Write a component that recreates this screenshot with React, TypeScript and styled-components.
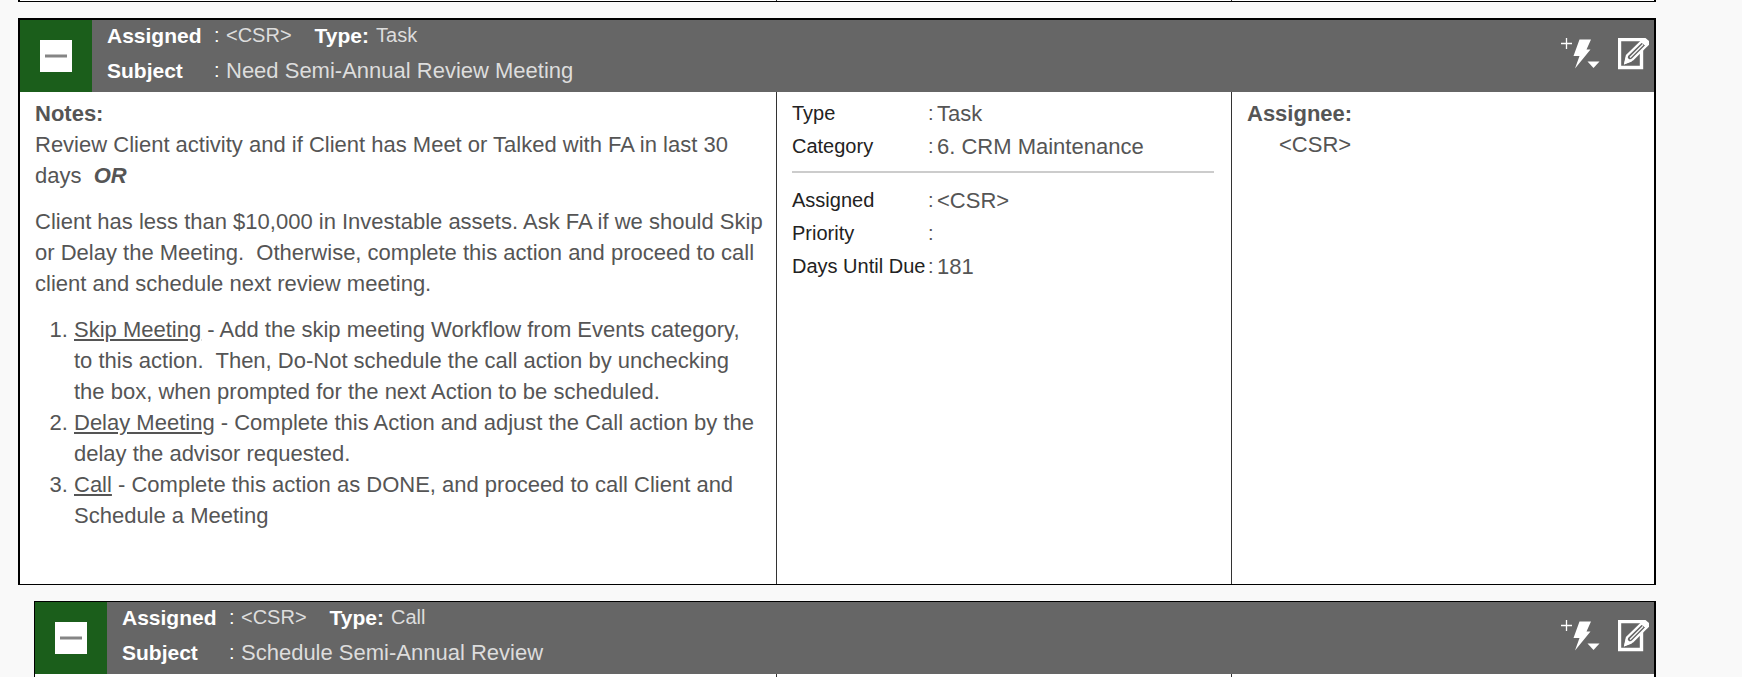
import React from "react";
import styled, { createGlobalStyle } from "styled-components";

const GlobalStyle = createGlobalStyle`
  * { box-sizing: border-box; }
  body {
    margin: 0;
    background: #f9f9f9;
    color: #555;
    font: 22px/31px "Liberation Sans", Arial, sans-serif;
  }
`;

const Page = styled.main`
  display: flex;
  flex-direction: column;
  gap: 16px;
  min-height: 100vh;
  padding: 0 86px 0 18px;
`;

const Card = styled.article<{ $nested?: boolean; $continued?: boolean }>`
  display: flex;
  flex-direction: column;
  flex: ${(p) => (p.$continued ? "1 0 auto" : "0 0 auto")};
  margin-left: ${(p) => (p.$nested ? 16 : 0)}px;
  border: solid #000;
  border-width: ${(p) =>
    p.$nested ? "1px 2px 0 1px" : "2px 2px 1px 2px"};
  background: #fff;
`;

const PreviousCard = styled(Card)`
  border-top: 0;
`;

const Header = styled.header`
  display: flex;
  height: 72px;
  background: #666;
  color: #fff;
`;

const TogglePane = styled.div`
  display: flex;
  align-items: center;
  justify-content: center;
  width: 72px;
  background: #1b5e1b;
`;

const IconButton = styled.button`
  display: flex;
  padding: 0;
  border: 0;
  background: none;
  color: #fff;
  cursor: pointer;
`;

const ToggleButton = styled(IconButton)`
  align-items: center;
  justify-content: center;
  width: 32px;
  height: 32px;
  background: #fff;
  color: #858585;
`;

const Heading = styled.div`
  display: flex;
  flex: 1;
  flex-direction: column;
  gap: 4px;
  padding-left: 15px;
`;

const HeadingRow = styled.div`
  display: flex;
`;

const HeadingLabel = styled.span<{ $wide?: boolean }>`
  width: ${(p) => (p.$wide ? "107px" : "auto")};
  padding-right: 7px;
  font-size: 21px;
  font-weight: bold;
`;

const HeadingColon = styled.span`
  width: 12px;
  font-size: 20px;
`;

const HeadingValue = styled.span<{ $large?: boolean }>`
  margin-right: 23px;
  color: #ddd;
  font-size: ${(p) => (p.$large ? 22 : 20)}px;
`;

const Actions = styled.div`
  display: flex;
  gap: 18px;
  align-items: flex-start;
  padding: 18px 4px 0 0;
`;

const Columns = styled.div`
  display: grid;
  flex: 1;
  grid-template-columns: minmax(0, 1fr) 455px 423px;
  min-height: 1px;
`;

const Column = styled.section`
  & + & {
    border-left: 1px solid #333;
  }
`;

const Notes = styled(Column)`
  padding: 6px 0 53px 15px;

  p {
    margin: 0 0 15px;
  }

  ol {
    margin: 0;
    padding: 0 16px 0 39px;
  }
`;

const Title = styled.h2`
  margin: 0;
  font-size: 22px;
  line-height: 31px;
`;

const Details = styled(Column)`
  padding: 5px 17px 0 15px;
`;

const FieldList = styled.dl`
  margin: 0;

  & + & {
    margin-top: 8px;
    padding-top: 11px;
    border-top: 2px solid #ccc;
  }
`;

const Field = styled.div`
  display: grid;
  grid-template-columns: 136px minmax(0, 1fr);
  height: 33px;
  line-height: 33px;

  dt {
    display: flex;
    justify-content: space-between;
    color: #222;
    font-size: 20px;
    white-space: nowrap;
  }

  dd {
    margin: 0;
    padding-left: 9px;
  }
`;

const Colon = styled.span`
  width: 0;
  color: #555;
`;

const Assignees = styled(Column)`
  padding: 6px 15px 0;
`;

const AssigneeName = styled.div`
  padding-left: 32px;
`;

const MinusIcon = () => (
  <svg width="22" height="4" viewBox="0 0 22 4" aria-hidden="true">
    <path d="M0 2h22" stroke="currentColor" strokeWidth="3" />
  </svg>
);

const QuickActionIcon = () => (
  <svg width="39" height="32" viewBox="0 0 39 32" fill="currentColor" aria-hidden="true">
    <path d="M0 5.5h11M5.5 0v11" stroke="currentColor" strokeWidth="1.3" />
    <path d="M18.5 1.5H30L25.5 11.5H29.5L14 30.5L18.5 18H12.5z" />
    <path d="M26.5 23.5h12L32.5 30z" />
  </svg>
);

const EditIcon = () => (
  <svg width="32" height="32" viewBox="0 0 32 32" fill="none" stroke="currentColor" aria-hidden="true">
    <path d="M23.5 10v19.5h-22v-28H24" strokeWidth="3.4" />
    <path d="M7.5 24.5L9 17.5L23.5 3.5L29 7L14.5 21.5z" fill="#666" strokeWidth="2.4" />
    <path d="M22 2.5L24 0h3.5L31 3v3.5L28.5 9z" fill="currentColor" stroke="none" />
    <path d="M12 19.5L25 6.5" strokeWidth="1.3" />
    <path d="M6 26.5l2-8 6 5z" fill="currentColor" stroke="none" />
  </svg>
);

type CardHeaderProps = { type: string; subject: string };

const CardHeader = ({ type, subject }: CardHeaderProps) => (
  <Header>
    <TogglePane>
      <ToggleButton type="button" aria-label="Collapse" aria-expanded="true">
        <MinusIcon />
      </ToggleButton>
    </TogglePane>
    <Heading>
      <HeadingRow>
        <HeadingLabel $wide>Assigned</HeadingLabel>
        <HeadingColon>:</HeadingColon>
        <HeadingValue>&lt;CSR&gt;</HeadingValue>
        <HeadingLabel>Type:</HeadingLabel>
        <HeadingValue>{type}</HeadingValue>
      </HeadingRow>
      <HeadingRow>
        <HeadingLabel $wide>Subject</HeadingLabel>
        <HeadingColon>:</HeadingColon>
        <HeadingValue $large>{subject}</HeadingValue>
      </HeadingRow>
    </Heading>
    <Actions>
      <IconButton type="button" aria-label="Add quick action">
        <QuickActionIcon />
      </IconButton>
      <IconButton type="button" aria-label="Edit">
        <EditIcon />
      </IconButton>
    </Actions>
  </Header>
);

const Row = ({ label, value }: { label: string; value?: string }) => (
  <Field>
    <dt>
      {label}
      <Colon>:</Colon>
    </dt>
    <dd>{value}</dd>
  </Field>
);

const EmptyColumns = () => (
  <Columns>
    <Column />
    <Column />
    <Column />
  </Columns>
);

export default function App() {
  return (
    <>
      <GlobalStyle />
      <Page>
        <PreviousCard>
          <EmptyColumns />
        </PreviousCard>

        <Card>
          <CardHeader type="Task" subject="Need Semi-Annual Review Meeting" />
          <Columns>
            <Notes>
              <Title>Notes:</Title>
              <p>
                Review Client activity and if Client has Meet or Talked with FA in last 30
                days&nbsp; <strong><em>OR</em></strong>
              </p>
              <p>
                Client has less than $10,000 in Investable assets. Ask FA if we should Skip
                or Delay the Meeting.&nbsp; Otherwise, complete this action and proceed to call
                client and schedule next review meeting.
              </p>
              <ol>
                <li>
                  <u>Skip Meeting</u> - Add the skip meeting Workflow from Events category,
                  to this action.&nbsp; Then, Do-Not schedule the call action by unchecking
                  the box, when prompted for the next Action to be scheduled.
                </li>
                <li>
                  <u>Delay Meeting</u> - Complete this Action and adjust the Call action by the
                  delay the advisor requested.
                </li>
                <li>
                  <u>Call</u> - Complete this action as DONE, and proceed to call Client and
                  Schedule a Meeting
                </li>
              </ol>
            </Notes>
            <Details>
              <FieldList>
                <Row label="Type" value="Task" />
                <Row label="Category" value="6. CRM Maintenance" />
              </FieldList>
              <FieldList>
                <Row label="Assigned" value="<CSR>" />
                <Row label="Priority" />
                <Row label="Days Until Due" value="181" />
              </FieldList>
            </Details>
            <Assignees>
              <Title>Assignee:</Title>
              <AssigneeName>&lt;CSR&gt;</AssigneeName>
            </Assignees>
          </Columns>
        </Card>

        <Card $nested $continued>
          <CardHeader type="Call" subject="Schedule Semi-Annual Review" />
          <EmptyColumns />
        </Card>
      </Page>
    </>
  );
}
